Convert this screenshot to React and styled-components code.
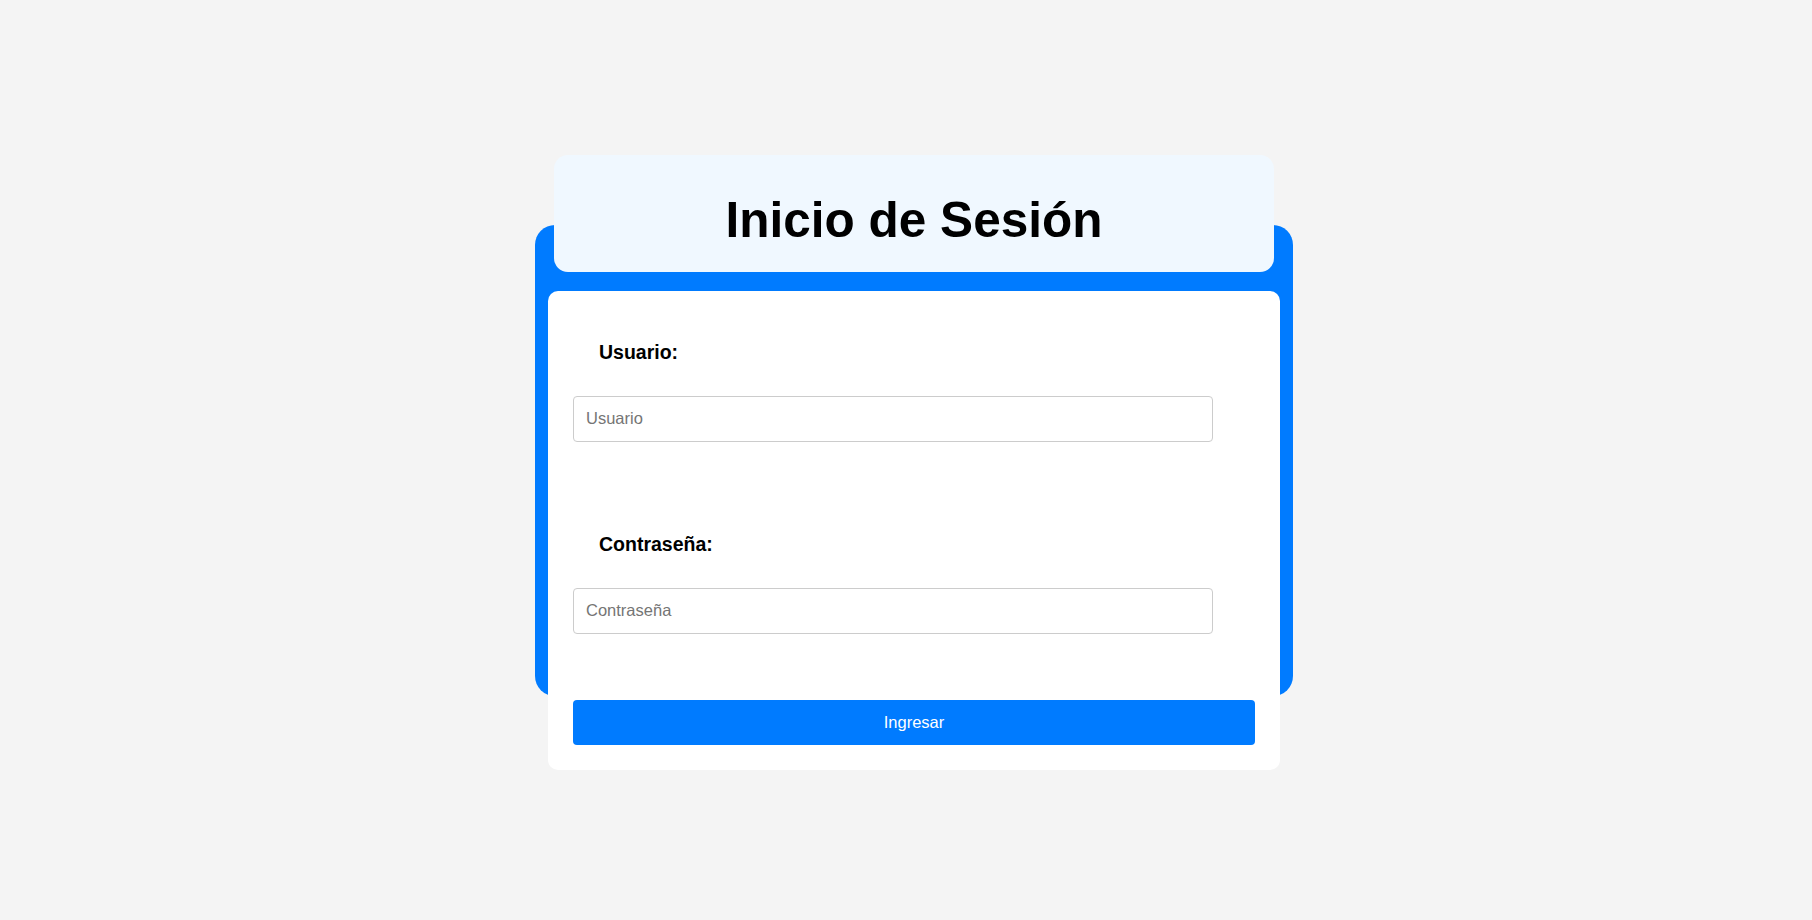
import React from "react";
import styled, { createGlobalStyle } from "styled-components";

const GlobalStyle = createGlobalStyle`
  html, body {
    margin: 0;
    padding: 0;
    background: #f4f4f4;
    font-family: "Liberation Sans", Arial, sans-serif;
  }
  * { box-sizing: border-box; }
`;

const Page = styled.div`
  min-height: 920px;
  display: flex;
  align-items: center;
  justify-content: center;
  padding-left: 16px;
`;

const Frame = styled.div`
  width: 758px;
  background: #007bff;
  border-radius: 20px;
  display: flex;
  flex-direction: column;
`;

const Header = styled.div`
  margin: -70px 19px 0;
  background: #f0f8ff;
  border-radius: 14px;
  padding: 36px 0 24px;
  text-align: center;
`;

const Title = styled.h1`
  margin: 0;
  font-size: 49.5px;
  font-weight: 700;
  line-height: normal;
  color: #000;
`;

const Card = styled.form`
  margin: 19px 13px -74px;
  background: #fff;
  border-radius: 10px;
  padding: 25px 25px 25px;
  display: flex;
  flex-direction: column;
`;

const Field = styled.div`
  padding-top: 25px;
  margin-bottom: 66px;
  display: flex;
  flex-direction: column;
  align-items: flex-start;
`;

const Label = styled.label`
  margin: 0 0 32px 26px;
  font-size: 19.5px;
  font-weight: 700;
  line-height: normal;
  color: #000;
`;

const Input = styled.input`
  width: 640px;
  height: 46px;
  padding: 0 12px;
  border: 1px solid #cccccc;
  border-radius: 4px;
  font-family: "Liberation Sans", Arial, sans-serif;
  font-size: 16.5px;
  color: #333;
  background: #fff;
  outline: none;
  &::placeholder { color: #757575; }
`;

const Button = styled.button`
  width: 100%;
  height: 45px;
  border: none;
  border-radius: 4px;
  background: #007bff;
  color: #fff;
  font-family: "Liberation Sans", Arial, sans-serif;
  font-size: 16.5px;
  cursor: pointer;
`;

export default function App() {
  return (
    <>
      <GlobalStyle />
      <Page>
        <Frame>
          <Header>
            <Title>Inicio de Sesión</Title>
          </Header>
          <Card onSubmit={(e) => e.preventDefault()}>
            <Field>
              <Label htmlFor="usuario">Usuario:</Label>
              <Input id="usuario" type="text" placeholder="Usuario" />
            </Field>
            <Field>
              <Label htmlFor="contrasena">Contraseña:</Label>
              <Input id="contrasena" type="password" placeholder="Contraseña" />
            </Field>
            <Button type="submit">Ingresar</Button>
          </Card>
        </Frame>
      </Page>
    </>
  );
}
